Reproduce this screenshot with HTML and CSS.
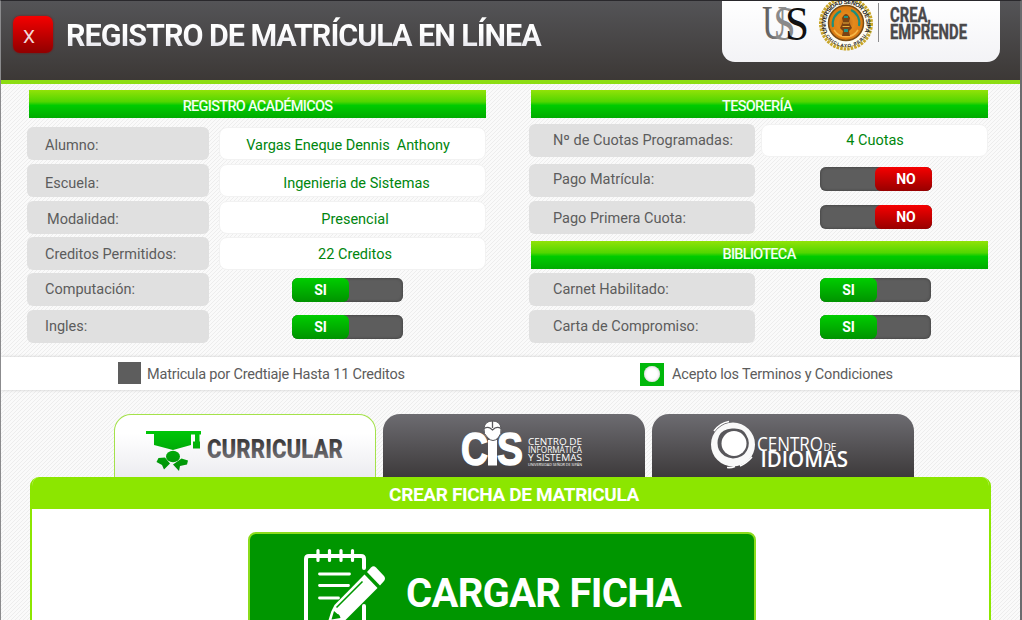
FILE: index.html
```html
<!DOCTYPE html>
<html lang="es">
<head>
<meta charset="utf-8">
<title>Registro de Matrícula en Línea</title>
<link rel="stylesheet" href="styles.css">
</head>
<body>
<div class="window">
  <header class="topbar">
    <button class="close">X</button>
    <h1 class="title">REGISTRO DE MATRÍCULA EN LÍNEA</h1>
    <div class="brand">
      <svg width="278" height="62" viewBox="722 0 278 62">
        <defs>
          <linearGradient id="gu" x1="0" x2="1"><stop offset="0" stop-color="#555"/><stop offset="1" stop-color="#999"/></linearGradient>
          <radialGradient id="gold"><stop offset="0" stop-color="#b5651a"/><stop offset=".45" stop-color="#e58a1c"/><stop offset="1" stop-color="#d9780f"/></radialGradient>
          <path id="ring" d="M827.5 32.5A20.3 20.3 0 1 1 864.5 32.5"/>
          <path id="ringlow" d="M824.5 33A23.4 23.4 0 0 0 867.5 33"/>
        </defs>
        <g font-family="Liberation Serif, serif" font-size="49">
          <text x="762" y="39" textLength="25" lengthAdjust="spacingAndGlyphs" fill="url(#gu)">U</text>
          <text x="773.500" y="39.500" textLength="22" lengthAdjust="spacingAndGlyphs" fill="#8a8a8a">S</text>
          <text x="785" y="39.500" textLength="24" lengthAdjust="spacingAndGlyphs" fill="#111">S</text>
        </g>
        <circle cx="846" cy="23.500" r="25.500" fill="#fffdf3" stroke="#c9a62a" stroke-width="3" stroke-dasharray="2.600 1"/>
        <circle cx="846" cy="23.500" r="23.500" fill="none" stroke="#8d7420" stroke-width=".7"/>
        <g font-family="Liberation Sans, sans-serif" font-weight="700" fill="#222">
          <text font-size="6"><textPath href="#ring" textLength="84">UNIVERSIDAD SEÑOR DE SIPÁN</textPath></text>
          <text font-size="4.500"><textPath href="#ringlow" startOffset="3" textLength="48">CHICLAYO PERU</textPath></text>
        </g>
        <circle cx="846" cy="23" r="17.500" fill="url(#gold)" stroke="#7b4d16" stroke-width="1.500"/>
        <path d="M833 27a14 14 0 0 1 8-16M851 10a14 14 0 0 1 8 16" fill="none" stroke="#1d8f7d" stroke-width="2"/>
        <path d="M834 30a14 14 0 0 0 24 0" fill="none" stroke="#f6b545" stroke-width="1.500"/>
        <path d="M842 18q4-8 8 0l-1 4 3 6-3 3 1 5h-8l1-5-3-3 3-6z" fill="#7a4313"/>
        <path d="M844 16h4v2h-4zM844 29h4v3h-4z" fill="#249482"/>
        <path d="M843 23h6M842.500 26.500h7" stroke="#eab03b"/>
        <path d="M878.500 3v39" stroke="#8c8c8f"/>
        <g font-family="Roboto, sans-serif" font-weight="700" fill="#4a494b" stroke="#4a494b" stroke-width=".4" font-size="19.500">
          <text x="890" y="21.500" textLength="41" lengthAdjust="spacingAndGlyphs">CREA,</text>
          <text x="890" y="39.300" textLength="77" lengthAdjust="spacingAndGlyphs">EMPRENDE</text>
        </g>
      </svg>
    </div>
  </header>

  <main class="records">
    <section class="academic">
      <h2 class="bar bar-academic">REGISTRO ACADÉMICOS</h2>
      <div class="rows rows-left">
        <div class="label low">Alumno:</div><div class="value low wide-shift">Vargas Eneque Dennis&nbsp; Anthony</div>
        <div class="label lower">Escuela:</div><div class="value lower shift">Ingenieria de Sistemas</div>
        <div class="label low indent">Modalidad:</div><div class="value low">Presencial</div>
        <div class="label">Creditos Permitidos:</div><div class="value">22 Creditos</div>
        <div class="label high">Computación:</div><div class="toggle yes"><span>SI</span></div>
        <div class="label high">Ingles:</div><div class="toggle yes"><span>SI</span></div>
      </div>
    </section>
    <section class="treasury">
      <h2 class="bar bar-treasury">TESORERÍA</h2>
      <div class="rows rows-right">
        <div class="label high">Nº de Cuotas Programadas:</div><div class="value high">4 Cuotas</div>
        <div class="label higher">Pago Matrícula:</div><div class="toggle no first"><span>NO</span></div>
        <div class="label">Pago Primera Cuota:</div><div class="toggle no"><span>NO</span></div>
        <h2 class="bar bar-library">BIBLIOTECA</h2>
        <div class="label high">Carnet Habilitado:</div><div class="toggle yes"><span>SI</span></div>
        <div class="label high">Carta de Compromiso:</div><div class="toggle yes"><span>SI</span></div>
      </div>
    </section>
  </main>

  <div class="options">
    <label class="option option-credit"><span class="box"></span><span class="caption">Matricula por Credtiaje Hasta 11 Creditos</span></label>
    <label class="option option-terms"><span class="box checked"></span><span class="caption">Acepto los Terminos y Condiciones</span></label>
  </div>

  <nav class="tabs">
    <a class="tab active">
      <svg width="260" height="62" viewBox="115 415 260 62">
        <defs>
          <linearGradient id="cap" gradientUnits="userSpaceOnUse" x1="0" y1="430" x2="0" y2="471"><stop offset="0" stop-color="#00c808"/><stop offset="1" stop-color="#008c08"/></linearGradient>
          <linearGradient id="cur" x1="0" y1="0" x2="0" y2="1"><stop offset=".2" stop-color="#3c3a3b"/><stop offset=".9" stop-color="#77767c"/></linearGradient>
        </defs>
        <g fill="url(#cap)">
          <path d="M146 431h55v3.500h-1.500v7h.5v7h-7v-7h2v-7h-4v10.500l-18 5-19-5v-11h-8z"/>
          <ellipse cx="173" cy="456.500" rx="7" ry="5.800"/>
          <path d="M165 457.500l5 6-6 6-2-4.500-5.500-3 2-4zM181.500 458.500l6.500 2-1 4-7 1.500-1 5-6-6.500z"/>
        </g>
        <text x="207" y="457.500" textLength="136" lengthAdjust="spacingAndGlyphs" font-family="Roboto, sans-serif" font-weight="900" font-size="25" fill="url(#cur)">CURRICULAR</text>
      </svg>
    </a>
    <a class="tab">
      <svg width="262" height="63" viewBox="383 414 262 63">
        <g fill="#fff" font-family="Liberation Sans, sans-serif" font-weight="700">
          <g font-size="47" stroke="#fff" stroke-width="1.400">
            <text x="461" y="465" textLength="27" lengthAdjust="spacingAndGlyphs">C</text>
            <text x="497" y="465" textLength="26" lengthAdjust="spacingAndGlyphs">S</text>
          </g>
          <path d="M488 440h9v25.500h-9z"/>
          <path d="M484 428q1-7 8.500-7t8.500 7q1 6-3 10-5 5-10 0-5-4-4-10z" stroke="#57565a"/>
          <path d="M484 428.500q3.500-2 6-.5l2.500 2 2.500-2q3-1.500 6 .5M492.500 421v7" fill="none" stroke="#57565a" stroke-width="1.300"/>
          <g font-family="Open Sans, sans-serif" font-weight="400" font-size="9.500">
            <text x="528" y="444.500" textLength="54" lengthAdjust="spacingAndGlyphs">CENTRO DE</text>
            <text x="528" y="452.500" font-size="8.500" textLength="54" lengthAdjust="spacingAndGlyphs">INFORMÁTICA</text>
            <text x="528" y="460.500" textLength="54" lengthAdjust="spacingAndGlyphs">Y SISTEMAS</text>
            <text x="528" y="466" font-size="4" textLength="54" lengthAdjust="spacingAndGlyphs">UNIVERSIDAD SEÑOR DE SIPÁN</text>
          </g>
        </g>
      </svg>
    </a>
    <a class="tab">
      <svg width="262" height="63" viewBox="652 414 262 63">
        <circle cx="733" cy="444.500" r="22" fill="#f9f9f9"/>
        <path d="M714 431q6-8 15-9.500M735 466.500q-4 1.500-8 1M752 457q-5 6-12 9" fill="none" stroke="#fff" stroke-width="1.500"/>
        <path d="M719 436q3-7 13-7.500 11-1 14 6 5 8 1 16-4 7.500-14 8-10-1-14-8.500-3-7 0-14z" fill="#58575b"/>
        <circle cx="734" cy="443.500" r="12.500" fill="#fff"/>
        <g fill="#fff" font-family="Open Sans, sans-serif">
          <text x="757" y="451" font-size="20" textLength="66" lengthAdjust="spacingAndGlyphs">CENTRO</text>
          <text x="823.500" y="451" font-size="11" textLength="13" lengthAdjust="spacingAndGlyphs">DE</text>
          <text x="760.500" y="467.300" font-size="22" font-weight="600" textLength="87.500" lengthAdjust="spacingAndGlyphs">IDIOMAS</text>
        </g>
      </svg>
    </a>
  </nav>

  <section class="panel">
    <h2 class="panel-title">CREAR FICHA DE MATRICULA</h2>
    <button class="load">
      <svg class="note" width="84" height="86" viewBox="302 546 84 86">
        <g fill="none" stroke="#fff" stroke-width="4" stroke-linecap="round">
          <path d="M306 640v-82q0-3 3-3h52q3 0 3 3v9M364 605v36"/>
          <path d="M318 549.500v10M329.500 549.500v10M341 549.500v10M352.500 549.500v10" stroke-width="3.200"/>
          <path d="M319.500 573h30M319.500 584.500h29M319.500 597h19" stroke-width="2.800"/>
        </g>
        <path d="M371 566.500q2.500-2.500 5 0l8 8.500q2 2.500 0 5l-4 4.500-13-13.500z" fill="#fff"/>
        <path d="M364.500 573.500l13 13.500-32 32q-9 4-18 7 1-12 7-22z" fill="#fff"/>
        <path d="M362.500 580.500l-26 26" stroke="#009600" stroke-width="1.600"/>
        <path d="M334 610l-2.500 8.500 9-1.500q-1-4-3-4z" fill="#009600"/>
      </svg>
      <span>CARGAR FICHA</span>
    </button>
  </section>
</div>
</body>
</html>
```
FILE: styles.css
```css
* { box-sizing: border-box; }
body {
  margin: 0;
  font-family: Roboto, "Open Sans", sans-serif;
  font-size: 14.5px;
  color: #5c5c5c;
}
h1, h2 { margin: 0; }
button { border: 0; padding: 0; font-family: inherit; }
svg { display: block; }

.window {
  width: 1022px;
  height: 620px;
  overflow: hidden;
  border-top: 1px solid #29282c;
  border-left: 1px solid #8b8b8d;
  border-right: 2px solid #6b6b6e;
  background-image: linear-gradient(135deg, #ededed 12.5%, #fafafa 12.5% 50%, #ededed 50% 62.5%, #fafafa 62.5%);
  background-size: 4px 4px;
}

.topbar {
  display: flex;
  height: 83px;
  padding-left: 12px;
  background: linear-gradient(#545457, #3c3836);
  border-bottom: 4px solid #8ddd13;
}
.close {
  width: 40px;
  height: 37px;
  margin-top: 15px;
  padding-right: 8px;
  border-radius: 7px;
  background: linear-gradient(#f50000, #900000);
  box-shadow: 0 0 2px #7a1010;
  color: #f3d9d9;
  font-size: 19px;
  line-height: 42px;
}
.title {
  margin-left: 13px;
  width: 656px;
  font-size: 30.5px;
  line-height: 69px;
  letter-spacing: -1.03px;
  white-space: nowrap;
  background: linear-gradient(#fff 40%, #dedee6 65%);
  -webkit-background-clip: text;
  background-clip: text;
  color: transparent;
}
.brand {
  width: 278px;
  height: 61px;
  border-radius: 0 0 13px 13px;
  background: linear-gradient(#fff, #f3f3f6);
  overflow: hidden;
}
.brand svg { margin-top: -1px; }

.records {
  display: flex;
  justify-content: space-between;
  height: 273px;
  padding: 6px 32px 0 26px;
}
.academic { width: 459px; }
.treasury { width: 459px; }
.bar {
  height: 28px;
  background: linear-gradient(#92e208 0%, #52d600 42%, #00cb00 55%, #00ac00 100%);
  color: #f2fff0;
  font-size: 14.5px;
  font-weight: 500;
  line-height: 33px;
  letter-spacing: -.7px;
  text-align: center;
}
.bar-academic { margin-left: 2px; }
.bar-treasury { margin-left: 2px; padding-right: 5px; }
.bar-library { grid-column: 1 / -1; margin-left: 2px; padding-right: 1px; line-height: 28px; }

.rows { display: grid; align-items: start; }
.rows-left {
  margin-top: 9px;
  grid-template-columns: 182px 267px;
  column-gap: 10px;
  grid-template-rows: 37px 37px 36px 36px 37px 33px;
}
.rows-right {
  margin-top: 6px;
  grid-template-columns: 226px 227px;
  column-gap: 6px;
  grid-template-rows: 40px 37px 40px 32px 37px 33px;
}
.label, .value {
  height: 33px;
  border-radius: 6px;
  line-height: 36px;
  white-space: nowrap;
}
.label { padding-left: 18px; background: #e0e0e0; }
.rows-right .label { padding-left: 24px; }
.label.indent { padding-left: 20px; }
.value {
  background: #fff;
  border: 1px solid #f2f2f2;
  border-radius: 8px;
  color: #00860e;
  text-align: center;
  line-height: 34px;
  padding-left: 5px;
}
.value.wide-shift { padding: 0 9px 0 0; letter-spacing: -.05px; }
.value.shift { padding-left: 8px; }
.rows-right .value { padding-left: 1px; }
.label.low { line-height: 38px; }
.value.low { line-height: 36px; }
.label.lower { line-height: 40px; }
.value.lower { line-height: 38px; }
.label.high { line-height: 34px; }
.label.higher { line-height: 32px; }
.value.high { line-height: 32px; }

.toggle {
  display: flex;
  width: 111px;
  height: 24px;
  margin: 5px 0 0 73px;
  border-radius: 6px;
  background: #5d5d5d;
  box-shadow: inset 0 0 3px #383838;
}
.rows-right .toggle { margin: 4px 0 0 59px; }
.rows-right .toggle.first { margin-top: 3px; }
.rows-right .toggle.yes { margin-top: 5px; }
.toggle span {
  width: 57px;
  border-radius: 6px;
  color: #fff;
  font-size: 14px;
  font-weight: 700;
  line-height: 25px;
  text-align: center;
}
.toggle.yes span { background: linear-gradient(#00cd00, #009300); }
.toggle.no { width: 112px; justify-content: flex-end; }
.toggle.no span { padding-left: 5px; background: linear-gradient(#f60000, #970000); }

.options {
  display: flex;
  height: 33px;
  background: #fff;
  box-shadow: 0 0 3px #c8c8c8;
  letter-spacing: -.2px;
}
.option { display: flex; align-items: center; gap: 6px; white-space: nowrap; }
.option-credit { width: 522px; padding-left: 117px; }
.option-terms { padding-left: 117px; gap: 8px; letter-spacing: -.17px; }
.caption { padding-top: 2px; }
.box { width: 23px; height: 22px; background: #5d5d5d; margin-top: -2px; }
.box.checked {
  display: flex;
  width: 24px;
  height: 23px;
  margin-top: 1px;
  background: #00b80a;
}
.box.checked::after {
  content: "";
  width: 16px;
  height: 16px;
  margin: auto;
  border-radius: 50%;
  background: #fff;
  box-shadow: inset 0 0 3px #bbb;
}

.tabs { display: flex; gap: 7px; height: 87px; padding: 24px 0 0 113px; }
.tab {
  width: 262px;
  height: 63px;
  border-radius: 17px 17px 0 0;
  background: linear-gradient(#6d6c71, #3d3a3b);
}
.tab.active {
  border: 1px solid #a4e24a;
  border-bottom: 0;
  background: linear-gradient(#fff 30%, #ececf0);
}

.panel {
  width: 961px;
  height: 160px;
  margin-left: 29px;
  border: 2px solid #8ce600;
  border-top: 0;
  border-radius: 9px 9px 0 0;
  background: #fff;
  overflow: hidden;
}
.panel-title {
  height: 32px;
  padding-left: 7px;
  background: #8ce600;
  color: #fff;
  font-size: 19px;
  letter-spacing: -.35px;
  line-height: 36px;
  text-align: center;
}
.load {
  display: flex;
  align-items: flex-start;
  width: 508px;
  height: 110px;
  margin: 23px 0 0 216px;
  padding: 13px 0 0 52px;
  border: 2px solid #8bdc1c;
  border-radius: 8px;
  background: #009600;
  color: #fff;
  font-size: 40px;
  font-weight: 700;
  letter-spacing: -.7px;
}
.load span { margin: 22px 0 0 20px; line-height: 50px; white-space: nowrap; }
```
